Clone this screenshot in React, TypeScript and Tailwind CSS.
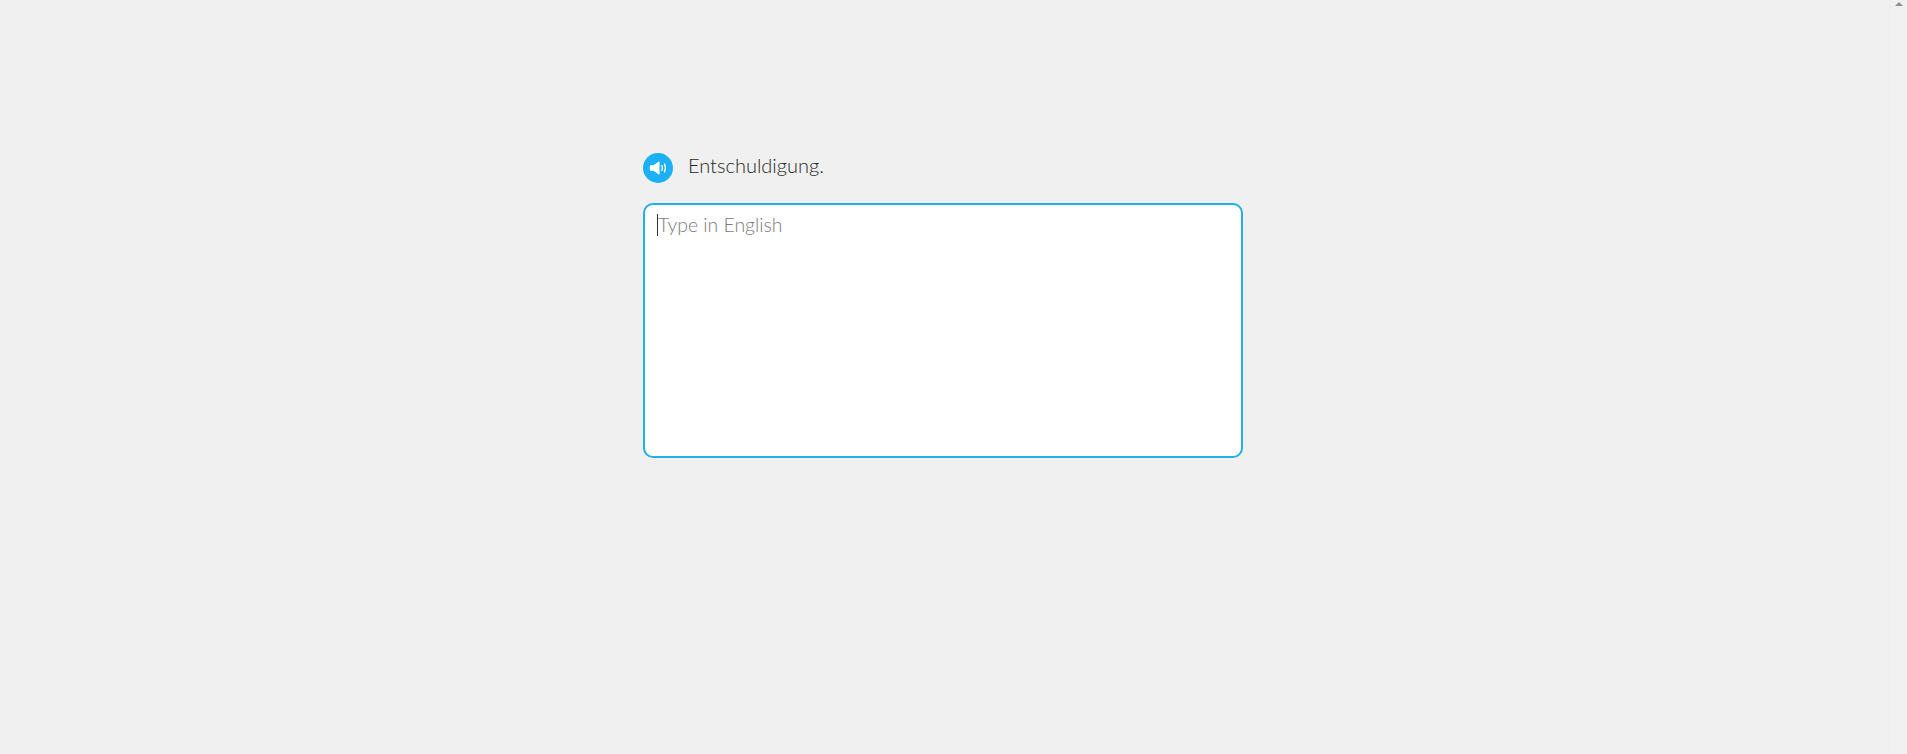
import React from "react";

export default function App() {
  return (
    <div className="flex h-[754px] w-full overflow-hidden bg-[#f0f0f0] font-['Lato',sans-serif]">
      <main className="flex-1 pl-[643px] pt-[153px]">
        <div className="flex h-[30px] w-[600px] items-center gap-[15px]">
          <button className="flex h-[30px] w-[30px] items-center justify-center rounded-full bg-[#1cb0f6]">
            <svg className="relative left-[1px] top-[-0.5px]" width="20" height="20" viewBox="0 0 18 18" fill="none">
              <path d="M1.5 6.6h2.6L8.6 3.2c.4-.3.9 0 .9.5v10.6c0 .5-.5.8-.9.5L4.1 11.4H1.5c-.4 0-.7-.3-.7-.7V7.300c0-.4.3-.7.7-.7z" fill="#fff" />
              <path d="M11.6 6.8c.6 1.400.6 3 0 4.400" stroke="#fff" strokeWidth="1.200" strokeLinecap="round" />
              <path d="M13.900 5.400c1 2.200 1 5 0 7.200" stroke="#fff" strokeWidth="1.200" strokeLinecap="round" />
            </svg>
          </button>
          <span className="relative top-[-3px] text-[20px] leading-[30px] font-light text-[#262626]">Entschuldigung.</span>
        </div>
        <div className="mt-[20px] h-[255px] w-[600px] rounded-[10px] border-2 border-[#22afe6] bg-white px-[12px] py-[6px]">
          <div className="flex items-center text-[19.4px] leading-[28px] font-light text-[#7c7c7c]">
            <span className="h-[22px] w-px bg-[#333333]" />
            <span>Type in English</span>
          </div>
        </div>
      </main>
      <aside className="flex w-[18px] flex-col items-center border-l border-[#ececec] bg-[#f1f1f1] pt-[2px]">
        <div className="h-0 w-0 border-x-[4px] border-b-[4px] border-x-transparent border-b-[#8f8f8f]" />
      </aside>
    </div>
  );
}
